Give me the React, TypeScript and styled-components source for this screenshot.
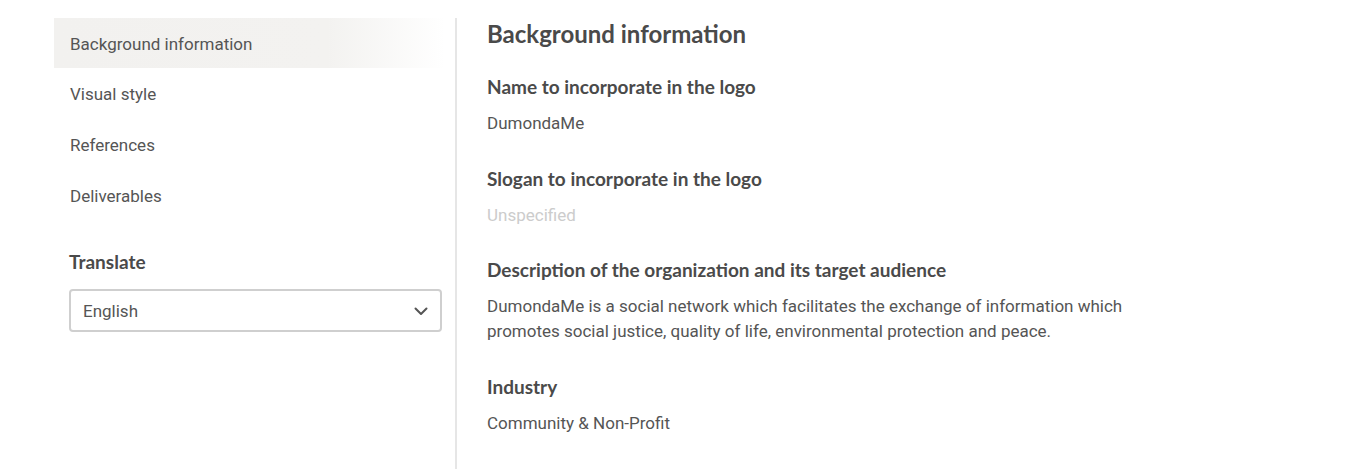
import React from "react";
import styled, { createGlobalStyle } from "styled-components";

const GlobalStyle = createGlobalStyle`
  html, body { margin: 0; padding: 0; background: #fff; }
  body { font-family: Roboto, "Liberation Sans", Arial, sans-serif; color: #555; }
  * { box-sizing: border-box; }
`;

const Page = styled.div`
  display: flex;
  align-items: stretch;
  min-height: 469px;
  padding: 18px 0 0 54px;
`;

const Sidebar = styled.aside`
  width: 391px;
  flex: none;
`;

const NavList = styled.nav`
  display: flex;
  flex-direction: column;
`;

const NavItem = styled.a<{ $active?: boolean }>`
  display: flex;
  align-items: center;
  height: ${(p) => (p.$active ? "50px" : "51px")};
  padding: ${(p) => (p.$active ? "2px 16px 0" : "1px 16px 0")};
  font-size: 17px;
  color: #555;
  text-decoration: none;
  background: ${(p) =>
    p.$active
      ? "linear-gradient(90deg, #f2f1ef 0%, #f3f2f0 70%, #ffffff 100%)"
      : "transparent"};
`;

const TranslateBlock = styled.div`
  padding: 29px 0 0 15px;
`;

const TranslateTitle = styled.h3`
  margin: 0;
  font-family: Lato, "Open Sans", sans-serif;
  font-weight: 700;
  font-size: 19px;
  line-height: 24px;
  color: #4a4a4a;
`;

const SelectBox = styled.div`
  margin-top: 15px;
  height: 43px;
  width: 373px;
  border: 2px solid #cfcfcf;
  border-radius: 4px;
  display: flex;
  align-items: center;
  justify-content: space-between;
  padding: 1px 12px 0 12px;
  font-size: 17px;
  color: #555;
`;

const Divider = styled.div`
  width: 2px;
  margin-left: 10px;
  background: #e6e6e6;
  flex: none;
`;

const Content = styled.main`
  padding-left: 30px;
  display: flex;
  flex-direction: column;
`;

const Title = styled.h1`
  margin: 0 0 24px;
  font-family: Lato, "Open Sans", sans-serif;
  font-weight: 700;
  font-size: 24px;
  line-height: 32px;
  color: #4a4a4a;
`;

const Section = styled.section`
  & + & { margin-top: 29.5px; }
`;

const SubTitle = styled.h2`
  margin: 0;
  font-family: Lato, "Open Sans", sans-serif;
  font-weight: 700;
  font-size: 19px;
  line-height: 26px;
  color: #4a4a4a;
`;

const Value = styled.p<{ $muted?: boolean }>`
  margin: 11px 0 0;
  font-size: 17px;
  line-height: 25px;
  max-width: 660px;
  color: ${(p) => (p.$muted ? "#cccccc" : "#555")};
`;

const Chevron = () => (
  <svg width="14" height="9" viewBox="0 0 14 9" fill="none">
    <path d="M1.5 1.5 L7 7 L12.5 1.5" stroke="#555" strokeWidth="2" strokeLinecap="round" strokeLinejoin="round" />
  </svg>
);

const navItems = ["Background information", "Visual style", "References", "Deliverables"];

const sections: { title: string; value: string; muted?: boolean }[] = [
  { title: "Name to incorporate in the logo", value: "DumondaMe" },
  { title: "Slogan to incorporate in the logo", value: "Unspecified", muted: true },
  {
    title: "Description of the organization and its target audience",
    value:
      "DumondaMe is a social network which facilitates the exchange of information which promotes social justice, quality of life, environmental protection and peace.",
  },
  { title: "Industry", value: "Community & Non-Profit" },
];

export default function App() {
  return (
    <>
      <GlobalStyle />
      <Page>
        <Sidebar>
          <NavList>
            {navItems.map((n, i) => (
              <NavItem key={n} $active={i === 0}>
                {n}
              </NavItem>
            ))}
          </NavList>
          <TranslateBlock>
            <TranslateTitle>Translate</TranslateTitle>
            <SelectBox>
              <span>English</span>
              <Chevron />
            </SelectBox>
          </TranslateBlock>
        </Sidebar>
        <Divider />
        <Content>
          <Title>Background information</Title>
          {sections.map((s) => (
            <Section key={s.title}>
              <SubTitle>{s.title}</SubTitle>
              <Value $muted={s.muted}>{s.value}</Value>
            </Section>
          ))}
        </Content>
      </Page>
    </>
  );
}
